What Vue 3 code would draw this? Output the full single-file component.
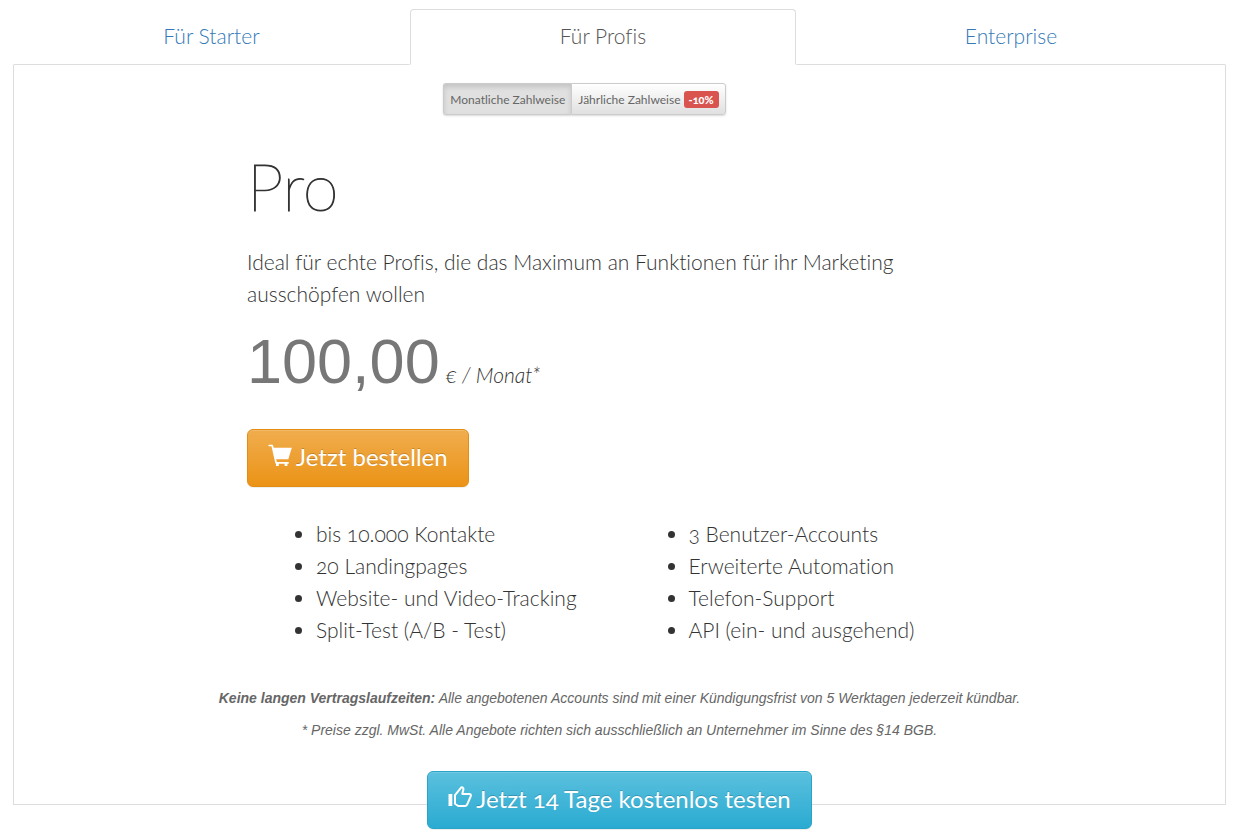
<script setup>
import { ref } from 'vue'

const tabs = ['Für Starter', 'Für Profis', 'Enterprise']
const activeTab = ref(1)
const yearly = ref(false)
const featureColumns = [
  ['bis 10.000 Kontakte', '20 Landingpages', 'Website- und Video-Tracking', 'Split-Test (A/B - Test)'],
  ['3 Benutzer-Accounts', 'Erweiterte Automation', 'Telefon-Support', 'API (ein- und ausgehend)'],
]
</script>

<template>
  <main class="pricing">
    <nav class="tabs">
      <a
        v-for="(tab, i) in tabs"
        :key="tab"
        href="#"
        class="tab"
        :class="{ active: i === activeTab }"
        @click.prevent="activeTab = i"
      >{{ tab }}</a>
    </nav>

    <section class="panel">
      <div class="plan">
        <div class="narrow billing">
          <div class="toggle">
            <button type="button" :class="{ pressed: !yearly }" @click="yearly = false">Monatliche Zahlweise</button>
            <button type="button" :class="{ pressed: yearly }" @click="yearly = true">
              Jährliche Zahlweise <span class="badge">-10%</span>
            </button>
          </div>
        </div>

        <h1>Pro</h1>
        <p class="narrow lead">Ideal für echte Profis, die das Maximum an Funktionen für ihr Marketing ausschöpfen wollen</p>
        <p class="price"><span class="amount">100,00</span> <em>€ / Monat*</em></p>

        <button type="button" class="btn order">
          <svg class="icon" viewBox="0 0 24 24" aria-hidden="true">
            <path d="M1.2 2.5h3l3.9 17.3h12" fill="none" stroke="#fff" stroke-width="1.7" stroke-linecap="round" stroke-linejoin="round" />
            <path d="M4.8 4.7h19L20.3 16.2H7.6z" fill="#fff" />
            <path d="M8 20h2.8v3H8zM16.6 20h2.8v3h-2.8z" fill="#fff" />
          </svg>
          <span>Jetzt bestellen</span>
        </button>

        <div class="features">
          <ul v-for="(column, i) in featureColumns" :key="i">
            <li v-for="item in column" :key="item">{{ item }}</li>
          </ul>
        </div>
      </div>

      <div class="notes">
        <p><strong>Keine langen Vertragslaufzeiten:</strong> Alle angebotenen Accounts sind mit einer Kündigungsfrist von 5 Werktagen jederzeit kündbar.</p>
        <p>* Preise zzgl. MwSt. Alle Angebote richten sich ausschließlich an Unternehmer im Sinne des §14 BGB.</p>
      </div>

      <div class="trial">
        <button type="button" class="btn test">
          <svg class="icon" viewBox="0 0 24 24" aria-hidden="true">
            <path d="M0.5 9h3.8v12H0.5z" fill="#fff" />
            <path d="M7 10.2L12.3 3.6Q13.2 1.8 14.6 2.5Q16 3.4 15.1 5.6L14.3 8.9H21.6Q23.6 9.3 22.6 11.6L19.1 19.6Q18.5 21 17 21H10.2L7 18.8z" fill="none" stroke="#fff" stroke-width="2" stroke-linejoin="round" />
          </svg>
          <span>Jetzt 14 Tage kostenlos testen</span>
        </button>
      </div>
    </section>
  </main>
</template>

<style>
body {
  background: #fff;
}
</style>

<style scoped>
.pricing {
  padding: 9px 12px 28px 13px;
  color: #333;
  font-family: Lato, "Liberation Sans", sans-serif;
  font-size: 21px;
  font-variant-ligatures: none;
  font-variant-numeric: oldstyle-nums;
  font-weight: 300;
  line-height: 32px;
}

button {
  font-family: inherit;
  font-variant-ligatures: inherit;
  font-variant-numeric: inherit;
  cursor: pointer;
}

.tabs {
  display: grid;
  grid-template-columns: 397fr 386fr 430fr;
}

.tab {
  padding: 10px 15px 12px;
  border: 1px solid transparent;
  border-bottom-color: #ddd;
  border-radius: 4px 4px 0 0;
  color: #337ab7;
  text-align: center;
  text-decoration: none;
}

.tab.active {
  border-color: #ddd #ddd transparent;
  color: #555;
}

.panel {
  border: 1px solid #ddd;
  border-top: 0;
}

.plan {
  max-width: 774px;
  margin-left: 233px;
  padding-top: 18px;
}

.narrow {
  max-width: 675px;
}

.billing {
  display: flex;
  justify-content: center;
}

.toggle {
  display: flex;
  border-radius: 3px;
  box-shadow: 0 1px 2px rgba(0, 0, 0, 0.15);
}

.toggle button {
  height: 32px;
  padding: 0 6px;
  border: 1px solid #ccc;
  border-radius: 0 3px 3px 0;
  background: linear-gradient(#fff, #e0e0e0);
  color: #666;
  font-size: 12px;
  font-weight: 400;
}

.toggle button:first-child {
  border-right: 0;
  border-radius: 3px 0 0 3px;
}

.toggle button.pressed {
  background: #e0e0e0;
  box-shadow: inset 0 3px 5px rgba(0, 0, 0, 0.125);
}

.badge {
  display: inline-block;
  padding: 0 5px;
  border-radius: 3px;
  background: #d9534f;
  color: #fff;
  font-size: 11px;
  font-weight: 900;
  line-height: 17px;
}

h1 {
  margin: 36px 0 25px;
  font-size: 65px;
  font-weight: 200;
  line-height: 70px;
  -webkit-text-stroke: 1px #333;
}

.lead {
  margin: 0 0 11px;
}

.price {
  margin: 0 0 14px;
  line-height: 80px;
}

.amount {
  color: #777;
  font-family: "Liberation Sans", sans-serif;
  font-size: 63px;
  font-weight: 400;
}

.btn {
  display: inline-flex;
  align-items: center;
  gap: 4px;
  height: 58px;
  padding: 0 20px 3px;
  border: 1px solid;
  border-radius: 6px;
  color: #fff;
  font-size: 24px;
  font-weight: 400;
  text-shadow: 0 -1px 0 rgba(0, 0, 0, 0.2);
  box-shadow: inset 0 1px 0 rgba(255, 255, 255, 0.15), 0 1px 1px rgba(0, 0, 0, 0.075);
}

.order {
  border-color: #e38d13;
  background: linear-gradient(#f0ad4e, #eb9316);
}

.test {
  border-color: #28a4c9;
  background: linear-gradient(#5bc0de, #2aabd2);
}

.icon {
  width: 24px;
  height: 24px;
  margin-bottom: 3px;
}

.features {
  display: grid;
  grid-template-columns: 1fr 1fr;
  padding: 31px 0 0 29px;
}

ul {
  margin: 0;
  padding-left: 40px;
}

.notes {
  padding-top: 36px;
  color: #666;
  font-family: "Liberation Sans", sans-serif;
  font-size: 14px;
  font-style: italic;
  font-weight: 400;
  text-align: center;
}

.notes p {
  margin: 0;
}

.trial {
  display: flex;
  justify-content: center;
  margin: 25px 0 -25px;
}
</style>
